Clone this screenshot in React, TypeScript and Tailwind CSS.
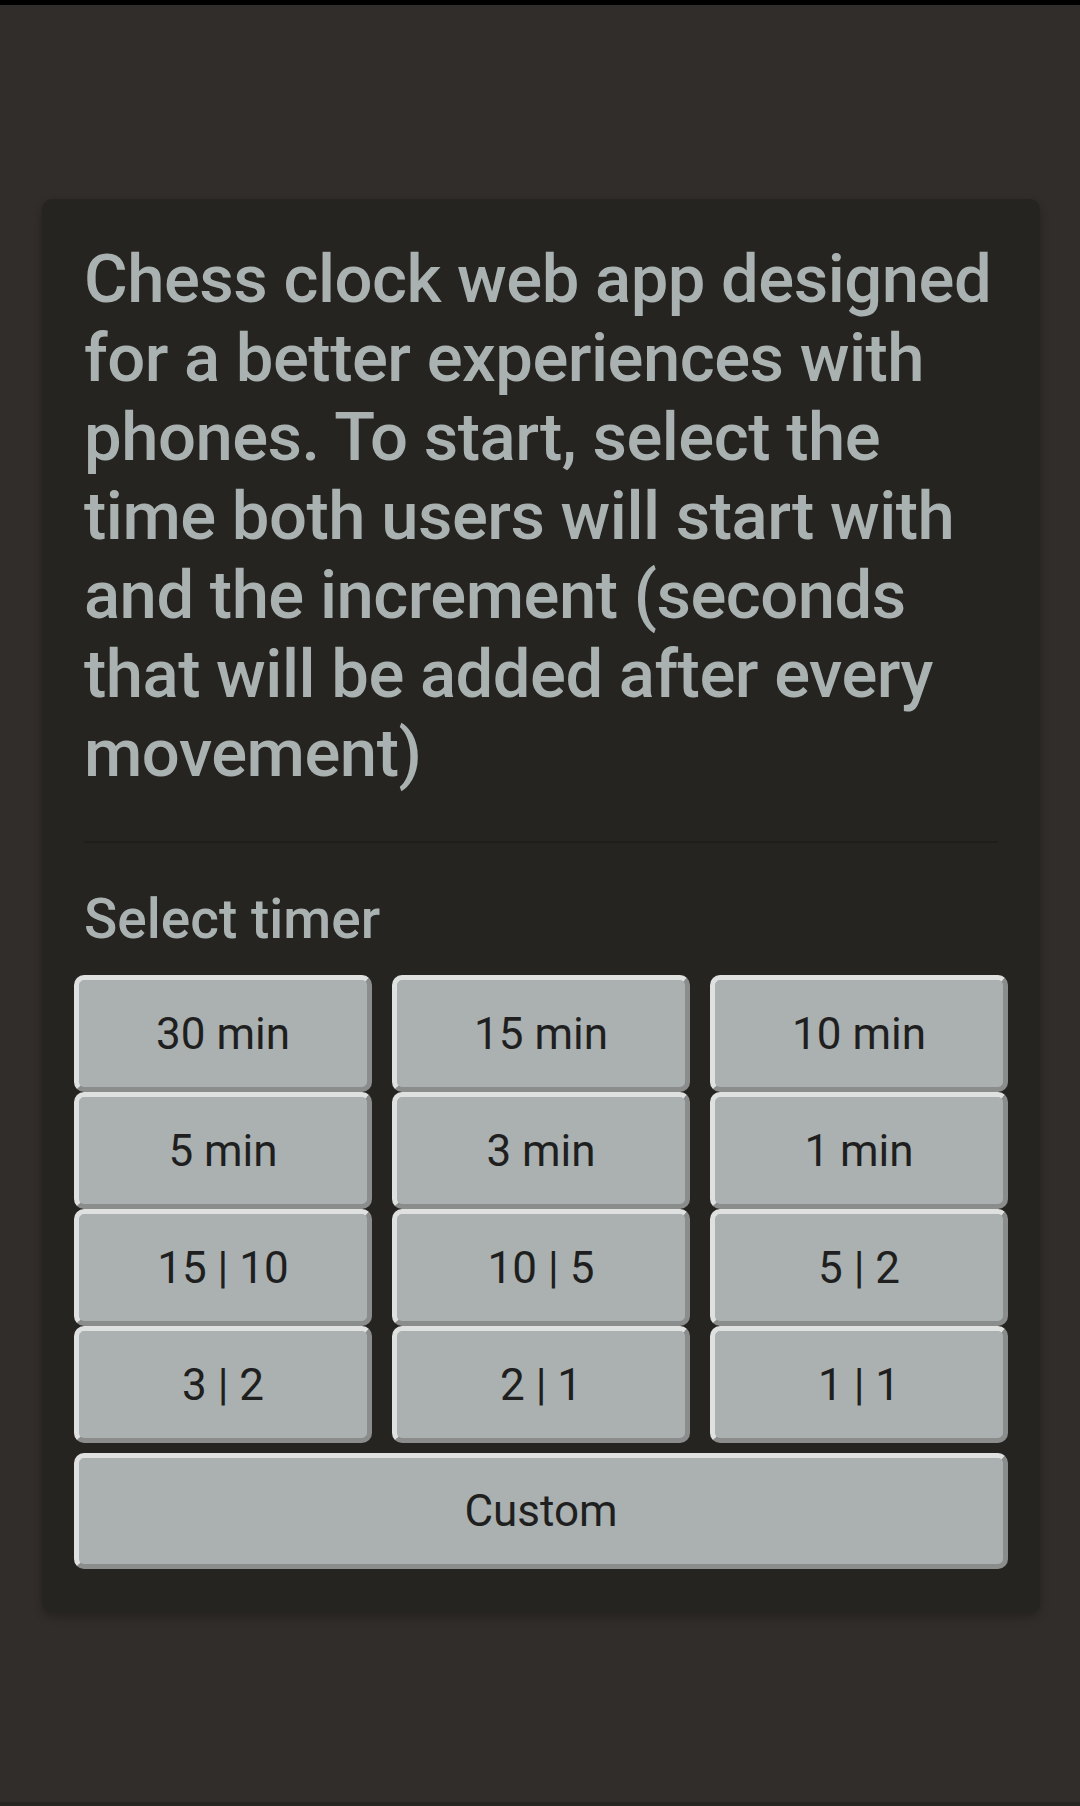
import React from 'react';

const timers = ['30 min', '15 min', '10 min', '5 min', '3 min', '1 min', '15 | 10', '10 | 5', '5 | 2', '3 | 2', '2 | 1', '1 | 1'];

const btn =
  'flex items-center justify-center rounded-[10px] border-[5px] border-t-[#dfe1e0] border-l-[#dfe1e0] border-b-[#8b8d8d] border-r-[#8b8d8d] bg-[#aab1b0] text-[44px] font-normal text-[#1f1f1f]';

const App: React.FC = () => {
  return (
    <div className="min-h-[1806px] w-[1080px] bg-[#312d2a] border-t-[5px] border-black border-b-[4px] border-b-[#282623] font-['Roboto',sans-serif]">
      <div className="ml-[42px] mt-[194px] w-[998px] rounded-[10px] bg-[#262421] pt-[41px] pb-[44px] shadow-[0_4px_8px_rgba(0,0,0,0.25)]">
        <div className="mx-[42px] border-b-2 border-[#201e1b] pb-[48px]">
          <p className="text-[67px] leading-[79px] font-medium tracking-[-0.5px] text-[#aab2b1]">
            Chess clock web app designed for a better experiences with phones. To start, select the time both users will start with and the increment (seconds that will be added after every movement)
          </p>
        </div>
        <h2 className="ml-[42px] mt-[42px] text-[55px] leading-[68px] font-medium text-[#aab2b1]">Select timer</h2>
        <div className="mx-[32px] mt-[22px]">
          <div className="grid grid-cols-3 gap-x-[20px]">
            {timers.map(t => (
              <button key={t} className={`${btn} h-[117px]`}>
                {t}
              </button>
            ))}
          </div>
          <button className={`${btn} mt-[10px] h-[116px] w-full`}>Custom</button>
        </div>
      </div>
    </div>
  );
};

export default App;
